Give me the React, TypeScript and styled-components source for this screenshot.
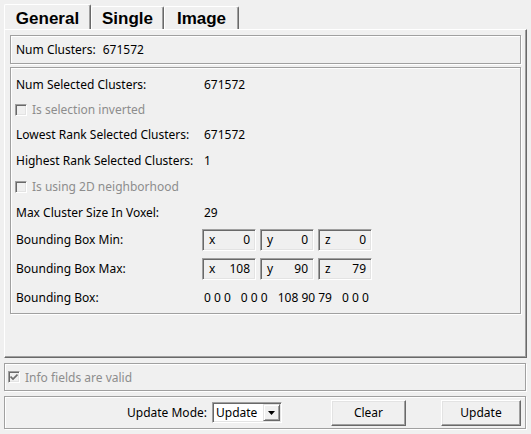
import React from 'react';
import styled, { createGlobalStyle } from 'styled-components';

const Global = createGlobalStyle`
  html, body { margin: 0; padding: 0; background: #f0f0f0; }
  body { font-family: "Noto Sans", "Liberation Sans", Arial, sans-serif; font-size: 12px; color: #000; }
  * { box-sizing: border-box; }
`;

const Page = styled.div`
  width: 531px;
  height: 434px;
  padding: 4px 4px 0 4px;
  display: flex;
  flex-direction: column;
`;

const TabBar = styled.div`
  display: flex;
  align-items: flex-end;
  height: 25px;
`;

const Tab = styled.div<{ $active?: boolean; $w: number }>`
  width: ${p => p.$w}px;
  height: ${p => (p.$active ? 25 : 23)}px;
  border-top: 1px solid #fff;
  border-left: 1px solid #fff;
  border-right: 1px solid #696969;
  box-shadow: inset -1px 0 0 #a0a0a0;
  border-radius: 2px 2px 0 0;
  font-family: "Liberation Sans", Arial, sans-serif;
  font-weight: bold;
  font-size: 17px;
  display: flex;
  align-items: center;
  justify-content: center;
  padding-top: ${p => (p.$active ? 3 : 1)}px;
`;

const Panel = styled.div`
  height: 329px;
  border-top: 1px solid #fff;
  border-left: 1px solid #fff;
  border-right: 1px solid #696969;
  border-bottom: 1px solid #696969;
  box-shadow: inset -1px -1px 0 #a0a0a0;
  padding: 5px 5px 0 5px;
  display: flex;
  flex-direction: column;
  gap: 3px;
`;

const Group = styled.div<{ $h: number }>`
  height: ${p => p.$h}px;
  border: 1px solid #a0a0a0;
  box-shadow: inset 1px 1px 0 #fff, 1px 1px 0 #fff;
`;

const InlineGroup = styled(Group)`
  display: flex;
  align-items: center;
  padding: 0 5px;
  gap: 7px;
`;

const ListGroup = styled(Group)`
  padding: 3px 5px 0 5px;
  display: flex;
  flex-direction: column;
`;

const Row = styled.div<{ $h: number }>`
  height: ${p => p.$h}px;
  display: grid;
  grid-template-columns: 186px auto;
  align-items: center;
`;

const Value = styled.span`
  padding-left: 2px;
  white-space: pre;
`;

const Triples = styled.span`
  padding-left: 2px;
  display: flex;
  gap: 10px;
  white-space: pre;
`;

const CheckRow = styled.div<{ $h: number }>`
  height: ${p => p.$h}px;
  display: flex;
  align-items: center;
  gap: 5px;
  margin-left: -1px;
`;

const Box = styled.span`
  width: 12px;
  height: 12px;
  border-top: 1px solid #a0a0a0;
  border-left: 1px solid #a0a0a0;
  border-right: 1px solid #fff;
  border-bottom: 1px solid #fff;
  box-shadow: inset 1px 1px 0 #696969, inset -1px -1px 0 #e3e3e3;
  background: #f0f0f0;
  display: flex;
  align-items: center;
  justify-content: center;
`;

const DisabledText = styled.span`
  color: #8d8d8d;
`;

const Fields = styled.div`
  display: flex;
  gap: 4px;
`;

const Field = styled.div`
  width: 54px;
  height: 22px;
  border-top: 1px solid #a0a0a0;
  border-left: 1px solid #a0a0a0;
  border-right: 1px solid #fff;
  border-bottom: 1px solid #fff;
  box-shadow: inset 1px 1px 0 #696969, inset -1px -1px 0 #e3e3e3;
  display: flex;
  align-items: center;
  justify-content: space-between;
  padding: 0 5px 0 6px;
`;

const OuterGroup = styled(Group)`
  margin-right: 1px;
  display: flex;
  align-items: center;
`;

const InfoGroup = styled(OuterGroup)`
  margin-top: 5px;
  padding-left: 3px;
  gap: 5px;
`;

const ActionGroup = styled(OuterGroup)`
  margin-top: 5px;
  justify-content: flex-end;
  padding-right: 4px;
`;

const ModeLabel = styled.span`
  margin-right: 5px;
`;

const Combo = styled.div`
  width: 70px;
  height: 21px;
  background: #fff;
  border-top: 1px solid #a0a0a0;
  border-left: 1px solid #a0a0a0;
  border-right: 1px solid #fff;
  border-bottom: 1px solid #fff;
  box-shadow: inset 1px 1px 0 #696969, inset -1px -1px 0 #e3e3e3;
  display: flex;
  align-items: center;
  justify-content: space-between;
  padding: 1px 1px 1px 3px;
`;

const ArrowBtn = styled.span`
  width: 17px;
  height: 17px;
  background: #f0f0f0;
  border-top: 1px solid #e3e3e3;
  border-left: 1px solid #e3e3e3;
  border-right: 1px solid #696969;
  border-bottom: 1px solid #696969;
  box-shadow: inset 1px 1px 0 #fff, inset -1px -1px 0 #a0a0a0;
  display: flex;
  align-items: center;
  justify-content: center;
`;

const Button = styled.button<{ $w: number; $ml: number }>`
  width: ${p => p.$w}px;
  height: 26px;
  margin-left: ${p => p.$ml}px;
  background: #f0f0f0;
  font: inherit;
  color: #000;
  border-top: 1px solid #fff;
  border-left: 1px solid #fff;
  border-right: 1px solid #696969;
  border-bottom: 1px solid #696969;
  box-shadow: inset -1px -1px 0 #a0a0a0, inset 1px 1px 0 #e3e3e3;
  padding: 0;
`;

const Check = ({ checked }: { checked?: boolean }) => (
  <Box>
    {checked && (
      <svg width="8" height="8" viewBox="0 0 8 8">
        <path d="M0.5 3.5 L3 6 L7.5 1.5" stroke="#6e6e6e" strokeWidth="1.7" fill="none" />
      </svg>
    )}
  </Box>
);

const XYZ = ({ vals }: { vals: string[] }) => (
  <Fields>
    {['x', 'y', 'z'].map((a, i) => (
      <Field key={a}>
        <span>{a}</span>
        <span>{vals[i]}</span>
      </Field>
    ))}
  </Fields>
);

export default function App() {
  return (
    <>
      <Global />
      <Page>
        <TabBar>
          <Tab $active $w={87}>General</Tab>
          <Tab $w={73}>Single</Tab>
          <Tab $w={75}>Image</Tab>
        </TabBar>
        <Panel>
          <InlineGroup $h={29}>
            <span>Num Clusters:</span>
            <span>671572</span>
          </InlineGroup>
          <ListGroup $h={247}>
            <Row $h={26}><span>Num Selected Clusters:</span><Value>671572</Value></Row>
            <CheckRow $h={25}><Check /><DisabledText>Is selection inverted</DisabledText></CheckRow>
            <Row $h={25}><span>Lowest Rank Selected Clusters:</span><Value>671572</Value></Row>
            <Row $h={26}><span>Highest Rank Selected Clusters:</span><Value>1</Value></Row>
            <CheckRow $h={27}><Check /><DisabledText>Is using 2D neighborhood</DisabledText></CheckRow>
            <Row $h={25}><span>Max Cluster Size In Voxel:</span><Value>29</Value></Row>
            <Row $h={29}><span>Bounding Box Min:</span><XYZ vals={['0', '0', '0']} /></Row>
            <Row $h={29}><span>Bounding Box Max:</span><XYZ vals={['108', '90', '79']} /></Row>
            <Row $h={28}>
              <span>Bounding Box:</span>
              <Triples>
                <span>0 0 0</span>
                <span>0 0 0</span>
                <span>108 90 79</span>
                <span>0 0 0</span>
              </Triples>
            </Row>
          </ListGroup>
        </Panel>
        <InfoGroup $h={28}>
          <Check checked />
          <DisabledText>Info fields are valid</DisabledText>
        </InfoGroup>
        <ActionGroup $h={33}>
          <ModeLabel>Update Mode:</ModeLabel>
          <Combo>
            <span>Update</span>
            <ArrowBtn>
              <svg width="7" height="4" viewBox="0 0 7 4">
                <path d="M0 0 H7 L3.5 4 Z" fill="#000" />
              </svg>
            </ArrowBtn>
          </Combo>
          <Button $w={75} $ml={49}>Clear</Button>
          <Button $w={80} $ml={35}>Update</Button>
        </ActionGroup>
      </Page>
    </>
  );
}
